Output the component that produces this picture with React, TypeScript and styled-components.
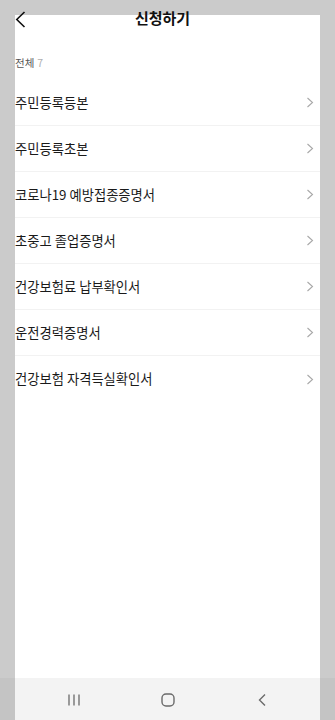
import React from "react";
import styled, { createGlobalStyle } from "styled-components";

const Global = createGlobalStyle`
  html, body { margin: 0; padding: 0; }
  body { font-family: "Noto Sans CJK KR", "Noto Sans", sans-serif; background: #cbcbcb; }
`;

const Screen = styled.div`
  width: 335px;
  height: 720px;
  background: #cbcbcb;
  display: flex;
  flex-direction: column;
  overflow: hidden;
`;

const Panel = styled.div`
  margin: 15px 15px 0;
  height: 663px;
  background: #ffffff;
  display: flex;
  flex-direction: column;
`;

const Header = styled.div`
  margin-top: -15px;
  height: 38px;
  display: grid;
  grid-template-columns: 40px 1fr 40px;
  align-items: start;
`;

const BackButton = styled.div`
  padding-top: 11px;
  display: flex;
`;

const Title = styled.h1`
  margin: 0;
  padding-top: 7px;
  text-align: center;
  font-size: 15px;
  font-weight: 700;
  color: #111;
  line-height: 22px;
  transform: translateX(-5px);
`;

const Count = styled.div`
  margin-top: 18px;
  height: 24px;
  font-size: 10.5px;
  color: #555;
  display: flex;
  gap: 3px;
  line-height: 14px;
`;

const Num = styled.span`
  color: #b0b0b0;
`;

const List = styled.ul`
  list-style: none;
  margin: 0;
  padding: 0;
`;

const Row = styled.li<{ $last?: boolean }>`
  height: 46px;
  display: flex;
  align-items: center;
  justify-content: space-between;
  border-bottom: ${(p) => (p.$last ? "none" : "1px solid #f2f2f2")};
  box-sizing: border-box;
  padding-right: 6px;
`;

const Label = styled.span`
  font-size: 13.3px;
  color: #1a1a1a;
  line-height: 18px;
`;

const NavBar = styled.div`
  height: 42px;
  background: #c4c4c4;
  display: flex;
  flex-direction: column;
`;

const NavStrip = styled.div`
  margin: 0 15px;
  height: 27px;
  background: #f3f3f3;
  display: flex;
  justify-content: center;
  gap: 80px;
  padding-top: 15px;
`;

const NavIcon = styled.div`
  width: 14px;
  height: 14px;
  display: flex;
  justify-content: center;
`;

const items = [
  "주민등록등본",
  "주민등록초본",
  "코로나19 예방접종증명서",
  "초중고 졸업증명서",
  "건강보험료 납부확인서",
  "운전경력증명서",
  "건강보험 자격득실확인서",
];

const Chevron = () => (
  <svg width="8" height="11" viewBox="0 0 8 11">
    <path d="M1.5 1 L6.5 5.5 L1.5 10" fill="none" stroke="#a8a8a8" strokeWidth="1.1" />
  </svg>
);

export default function App() {
  return (
    <Screen>
      <Global />
      <Panel>
        <Header>
          <BackButton>
            <svg width="11" height="17" viewBox="0 0 11 17">
              <path d="M9.5 1 L1.8 8.5 L9.5 16" fill="none" stroke="#111" strokeWidth="1.6" />
            </svg>
          </BackButton>
          <Title>신청하기</Title>
          <div />
        </Header>
        <Count>
          <span>전체</span>
          <Num>7</Num>
        </Count>
        <List>
          {items.map((t, i) => (
            <Row key={t} $last={i === items.length - 1}>
              <Label>{t}</Label>
              <Chevron />
            </Row>
          ))}
        </List>
      </Panel>
      <NavBar>
        <NavStrip>
          <NavIcon>
            <svg width="14" height="14" viewBox="0 0 14 14">
              <path d="M2 1.5V12.5M7 1.5V12.5M12 1.5V12.5" stroke="#6a6a6a" strokeWidth="1.3" />
            </svg>
          </NavIcon>
          <NavIcon>
            <svg width="14" height="14" viewBox="0 0 14 14">
              <rect x="1" y="1" width="12" height="12" rx="4" fill="none" stroke="#6a6a6a" strokeWidth="1.4" />
            </svg>
          </NavIcon>
          <NavIcon>
            <svg width="14" height="14" viewBox="0 0 14 14">
              <path d="M10 1.5 L4.5 7 L10 12.5" fill="none" stroke="#6a6a6a" strokeWidth="1.4" />
            </svg>
          </NavIcon>
        </NavStrip>
      </NavBar>
    </Screen>
  );
}
